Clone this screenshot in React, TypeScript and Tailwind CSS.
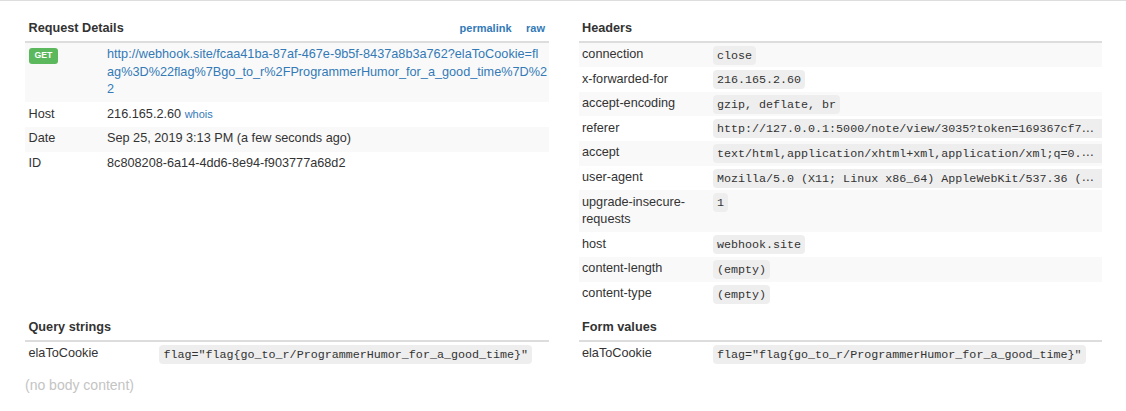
import React from "react";

const sans = "font-['Liberation_Sans',Arial,sans-serif]";
const mono = "font-['Liberation_Mono','Courier_New',monospace]";

function Code({ children }: { children: React.ReactNode }) {
  return (
    <code className={`${mono} text-[11.7px] leading-none bg-[#eeeeee] text-[#333] rounded-[4px] px-[4px] py-[2.5px]`}>
      {children}
    </code>
  );
}

function SectionTable({
  title,
  right,
  firstCol,
  rows,
  striped = true,
}: {
  title: string;
  right?: React.ReactNode;
  firstCol: string;
  rows: { k: React.ReactNode; v: React.ReactNode; clip?: boolean }[];
  striped?: boolean;
}) {
  return (
    <table className="w-full table-fixed border-collapse">
      <colgroup>
        <col className={firstCol} />
        <col />
      </colgroup>
      <thead>
        <tr className="border-b-2 border-[#dddddd]">
          <th colSpan={2} className="text-left font-bold px-[3.5px] py-[3.5px] h-[25px] align-middle">
            <div className="flex items-center justify-between">
              <span>{title}</span>
              {right}
            </div>
          </th>
        </tr>
      </thead>
      <tbody>
        {rows.map((r, i) => (
          <tr key={i} className={striped && i % 2 === 0 ? "bg-[#f9f9f9]" : ""}>
            <td className="px-[3.5px] py-[3.5px] align-top">{r.k}</td>
            <td
              className={`px-[3.5px] py-[3.5px] align-top ${
                r.clip ? "overflow-hidden text-ellipsis whitespace-nowrap" : ""
              }`}
            >
              {r.v}
            </td>
          </tr>
        ))}
      </tbody>
    </table>
  );
}

export default function App() {
  const flag = 'flag="flag{go_to_r/ProgrammerHumor_for_a_good_time}"';
  return (
    <div className={`${sans} min-h-[411px] bg-white border-t border-[#dddddd] text-[12.7px] leading-[17.6px] text-[#333333]`}>
      <div className="pl-[25px] pr-[24px] pt-[15px] grid grid-cols-2 gap-x-[30px] gap-y-[9px] items-start">
        <SectionTable
          title="Request Details"
          firstCol="w-[15%]"
          right={
            <span className="flex gap-[14.5px] text-[11px] font-bold text-[#337ab7]">
              <span>permalink</span>
              <span>raw</span>
            </span>
          }
          rows={[
            {
              k: (
                <span className="inline-block mt-[1.5px] bg-[#5cb85c] text-white font-bold text-[8.7px] leading-[15.7px] px-[6px] rounded-[3px]">
                  GET
                </span>
              ),
              v: (
                <span className="text-[#337ab7] whitespace-nowrap">
                  http://webhook.site/fcaa41ba-87af-467e-9b5f-8437a8b3a762?elaToCookie=fl
                  <br />
                  ag%3D%22flag%7Bgo_to_r%2FProgrammerHumor_for_a_good_time%7D%2
                  <br />2
                </span>
              ),
            },
            {
              k: "Host",
              v: (
                <span>
                  216.165.2.60 <span className="text-[#337ab7] text-[11px]">whois</span>
                </span>
              ),
            },
            { k: "Date", v: "Sep 25, 2019 3:13 PM (a few seconds ago)" },
            { k: "ID", v: "8c808208-6a14-4dd6-8e94-f903777a68d2" },
          ]}
        />
        <SectionTable
          title="Headers"
          firstCol="w-1/4"
          rows={[
            { k: "connection", v: <Code>close</Code> },
            { k: "x-forwarded-for", v: <Code>216.165.2.60</Code> },
            { k: "accept-encoding", v: <Code>gzip, deflate, br</Code> },
            {
              k: "referer",
              clip: true,
              v: <Code>http://127.0.0.1:5000/note/view/3035?token=169367cf7e5b1c0d8a24f6e3</Code>,
            },
            {
              k: "accept",
              clip: true,
              v: (
                <Code>
                  text/html,application/xhtml+xml,application/xml;q=0.9,image/webp,image/apng,*/*;q=0.8,application/signed-exchange;v=b3
                </Code>
              ),
            },
            {
              k: "user-agent",
              clip: true,
              v: (
                <Code>
                  Mozilla/5.0 (X11; Linux x86_64) AppleWebKit/537.36 (KHTML, like Gecko) Chrome/77.0.3865.90 Safari/537.36
                </Code>
              ),
            },
            { k: "upgrade-insecure-requests", v: <Code>1</Code> },
            { k: "host", v: <Code>webhook.site</Code> },
            { k: "content-length", v: <Code>(empty)</Code> },
            { k: "content-type", v: <Code>(empty)</Code> },
          ]}
        />
        <SectionTable
          title="Query strings"
          firstCol="w-1/4"
          striped={false}
          rows={[{ k: "elaToCookie", v: <Code>{flag}</Code> }]}
        />
        <SectionTable
          title="Form values"
          firstCol="w-1/4"
          striped={false}
          rows={[{ k: "elaToCookie", v: <Code>{flag}</Code> }]}
        />
      </div>
      <div className="pl-[25px] mt-[9px] text-[14px] leading-[20px] text-[#c4c4c4]">(no body content)</div>
    </div>
  );
}
